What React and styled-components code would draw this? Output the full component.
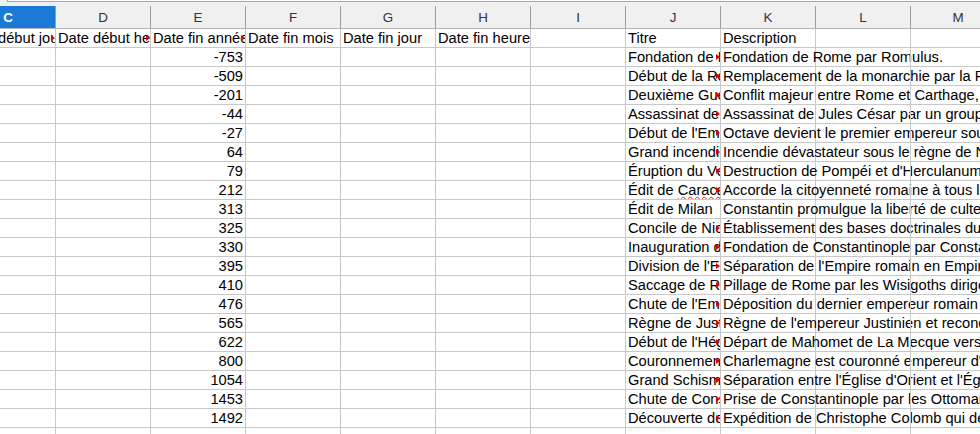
import React from "react";
import styled, { createGlobalStyle } from "styled-components";

const GlobalStyle = createGlobalStyle`
  body {
    margin: 0;
    background: #fff;
    font-family: "Liberation Sans", Arial, sans-serif;
  }
`;

const letters = ["C", "D", "E", "F", "G", "H", "I", "J", "K", "L", "M"];

const events = [
  ["-753", "Fondation de Rome", "Fondation de Rome par Romulus."],
  ["-509", "Début de la République romaine", "Remplacement de la monarchie par la République."],
  ["-201", "Deuxième Guerre punique", "Conflit majeur entre Rome et Carthage, remporté par Rome."],
  ["-44", "Assassinat de Jules César", "Assassinat de Jules César par un groupe de sénateurs."],
  ["-27", "Début de l'Empire romain", "Octave devient le premier empereur sous le nom d'Auguste."],
  ["64", "Grand incendie de Rome", "Incendie dévastateur sous le règne de Néron."],
  ["79", "Éruption du Vésuve", "Destruction de Pompéi et d'Herculanum."],
  ["212", "Édit de Caracalla", "Accorde la citoyenneté romaine à tous les hommes libres."],
  ["313", "Édit de Milan", "Constantin promulgue la liberté de culte pour les chrétiens."],
  ["325", "Concile de Nicée", "Établissement des bases doctrinales du christianisme."],
  ["330", "Inauguration de Constantinople", "Fondation de Constantinople par Constantin."],
  ["395", "Division de l'Empire romain", "Séparation de l'Empire romain en Empire d'Orient et d'Occident."],
  ["410", "Saccage de Rome", "Pillage de Rome par les Wisigoths dirigés par Alaric."],
  ["476", "Chute de l'Empire romain d'Occident", "Déposition du dernier empereur romain d'Occident."],
  ["565", "Règne de Justinien", "Règne de l'empereur Justinien et reconquête de l'Occident."],
  ["622", "Début de l'Hégire", "Départ de Mahomet de La Mecque vers Médine."],
  ["800", "Couronnement de Charlemagne", "Charlemagne est couronné empereur d'Occident."],
  ["1054", "Grand Schisme", "Séparation entre l'Église d'Orient et l'Église d'Occident."],
  ["1453", "Chute de Constantinople", "Prise de Constantinople par les Ottomans."],
  ["1492", "Découverte de l'Amérique", "Expédition de Christophe Colomb qui découvre l'Amérique."],
];

const Sheet = styled.div`
  width: 980px;
  height: 434px;
  overflow: hidden;
  background: #fff;
`;

const TopStrip = styled.div`
  height: 6px;
  background: #f0f0f0;
`;

const FormulaEdge = styled.div`
  margin-left: 7px;
  height: 1px;
  background: #fff;
  border-left: 1px solid #a8a8a8;
  border-bottom: 1px solid #a8a8a8;
`;

const HeaderRow = styled.div`
  display: flex;
  height: 23px;
  background: #f0f0f0;
  border-bottom: 1px solid #b4b4b4;
  box-sizing: border-box;
`;

const ColHead = styled.div`
  flex: none;
  width: 95px;
  height: 22px;
  box-sizing: border-box;
  padding-top: 2px;
  line-height: 20px;
  text-align: center;
  font-size: 13.4px;
  border-right: 1px solid #9c9c9c;
  color: ${(p) => (p.$active ? "#fff" : "#333")};
  font-weight: ${(p) => (p.$active ? "bold" : "normal")};
  background: ${(p) => (p.$active ? "#1a7ad6" : "transparent")};
  margin-left: ${(p) => (p.$lead ? "-39px" : "0")};
`;

const Row = styled.div`
  display: flex;
`;

const Cell = styled.div`
  position: relative;
  flex: none;
  width: 95px;
  height: 19px;
  box-sizing: border-box;
  padding: 1px 2px 0;
  line-height: 17px;
  font-size: 14.67px;
  color: #000;
  white-space: nowrap;
  overflow: ${(p) => (p.$spill ? "visible" : "hidden")};
  text-align: ${(p) => (p.$num ? "right" : "left")};
  border-right: 1px solid #c8c8c8;
  border-bottom: 1px solid #c8c8c8;
  margin-left: ${(p) => (p.$lead ? "-39px" : "0")};
`;

const OverflowMark = styled.span`
  position: absolute;
  right: 0;
  top: 6px;
  width: 0;
  height: 0;
  border-left: 4px solid #e00000;
  border-top: 3px solid transparent;
  border-bottom: 3px solid transparent;
`;

const Misspelled = styled.span`
  text-decoration: underline wavy #e02020;
  text-decoration-thickness: 1px;
  text-decoration-skip-ink: none;
  text-underline-offset: 1px;
`;

const Text = ({ children, clipped, ...rest }) => (
  <Cell {...rest}>
    {children}
    {clipped && <OverflowMark />}
  </Cell>
);

const renderTitle = (title) => {
  if (title === "Édit de Caracalla") {
    return (
      <>
        Édit de <Misspelled>Caracalla</Misspelled>
      </>
    );
  }
  return title;
};

export default function App() {
  return (
    <Sheet>
      <GlobalStyle />
      <TopStrip>
        <FormulaEdge />
      </TopStrip>
      <HeaderRow>
        {letters.map((l, i) => (
          <ColHead key={l} $lead={i === 0} $active={l === "C"}>
            {l}
          </ColHead>
        ))}
      </HeaderRow>

      <Row>
        <Text $lead clipped>Date début jour</Text>
        <Text clipped>Date début heure</Text>
        <Text clipped>Date fin année</Text>
        <Text>Date fin mois</Text>
        <Text>Date fin jour</Text>
        <Text>Date fin heure</Text>
        <Text />
        <Text>Titre</Text>
        <Text>Description</Text>
        <Text />
        <Text />
      </Row>

      {events.map(([year, title, desc]) => (
        <Row key={year}>
          <Text $lead />
          <Text />
          <Text $num>{year}</Text>
          <Text />
          <Text />
          <Text />
          <Text />
          <Text clipped={title !== "Édit de Milan"}>{renderTitle(title)}</Text>
          <Text $spill>{desc}</Text>
          <Text />
          <Text />
        </Row>
      ))}

      <Row>
        {letters.map((l, i) => (
          <Text key={l} $lead={i === 0} />
        ))}
      </Row>
    </Sheet>
  );
}
